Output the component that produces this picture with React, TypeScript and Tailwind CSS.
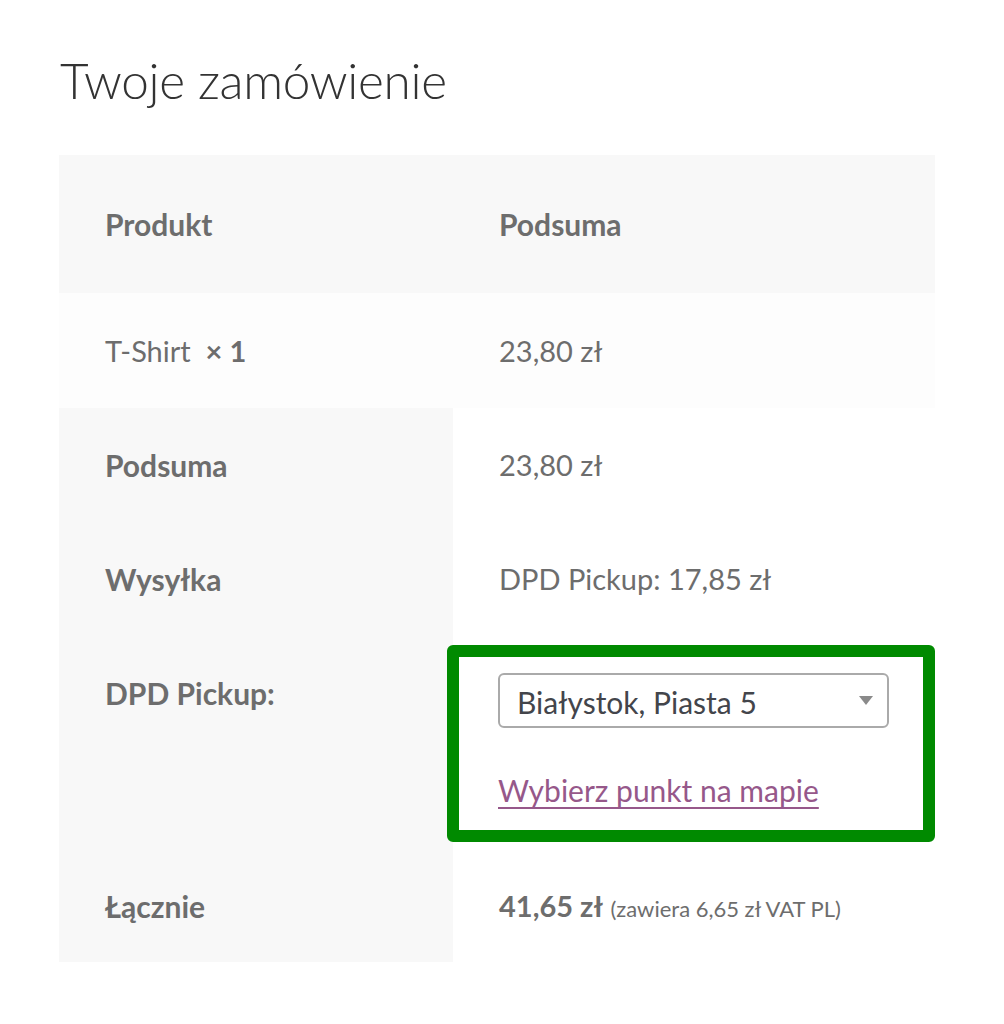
import React from 'react';

const labelCls = 'text-[30px] font-bold text-[#6d6d6d]';
const valueCls = 'text-[#6d6d6d]';

const App = () => {
  return (
    <div className="min-h-screen bg-white font-['Lato',sans-serif] pt-[50px] pl-[59px]">
      {/* Heading */}
      <h1 className="ml-[1px] text-[49.5px] font-light leading-[60px] text-[#333333] tracking-[-0.3px]">
        Twoje zamówienie
      </h1>

      {/* Order table */}
      <div className="mt-[45px] w-[876px] text-[29px]">
        <div className="flex h-[138px] items-center bg-[#f8f8f8]">
          <div className={`w-[394px] pl-[46px] ${labelCls}`}>Produkt</div>
          <div className={`pl-[46px] ${labelCls}`}>Podsuma</div>
        </div>

        <div className="flex h-[115px] items-center bg-[#fdfdfd]">
          <div className={`w-[394px] pl-[46px] ${valueCls}`}>
            T-Shirt&nbsp; <span className="font-bold">× 1</span>
          </div>
          <div className={`pl-[46px] ${valueCls}`}>23,80 zł</div>
        </div>

        <div className="flex h-[114px]">
          <div className={`flex w-[394px] items-center bg-[#f8f8f8] pl-[46px] ${labelCls}`}>Podsuma</div>
          <div className={`flex items-center pl-[46px] ${valueCls}`}>23,80 zł</div>
        </div>

        <div className="flex h-[114px]">
          <div className={`flex w-[394px] items-center bg-[#f8f8f8] pl-[46px] ${labelCls}`}>Wysyłka</div>
          <div className={`flex items-center pl-[46px] ${valueCls}`}>DPD Pickup: 17,85 zł</div>
        </div>

        <div className="flex h-[214px]">
          <div className={`w-[394px] bg-[#f8f8f8] pl-[46px] pt-[37px] leading-[40px] ${labelCls}`}>DPD Pickup:</div>
          <div className="flex-1">
            <div className="-ml-[6px] mt-[9px] h-[197px] rounded-[6px] border-[12px] border-[#008a00] pl-[39px] pr-[34px] pt-[16px]">
              <div className="flex h-[55px] items-center justify-between rounded-[6px] border-2 border-[#aaaaaa] bg-white pl-[17px] pr-[14px]">
                <span className="pt-[4px] text-[30px] text-[#43454b]">Białystok, Piasta 5</span>
                <svg width="14" height="9" viewBox="0 0 14 9">
                  <path d="M0 0 L14 0 L7 9 Z" fill="#8a8a8a" />
                </svg>
              </div>
              <a href="#" className="mt-[42px] block w-fit text-[30px] leading-[40px] text-[#96588a] underline decoration-[2px] underline-offset-[5px]">
                Wybierz punkt na mapie
              </a>
            </div>
          </div>
        </div>

        <div className="flex h-[112px]">
          <div className={`flex w-[394px] items-center bg-[#f8f8f8] pl-[46px] ${labelCls}`}>Łącznie</div>
          <div className={`flex items-center pl-[46px] ${valueCls}`}>
            <span>
              <span className="font-bold">41,65 zł</span>{' '}
              <span className="text-[22px]">(zawiera 6,65 zł VAT PL)</span>
            </span>
          </div>
        </div>
      </div>
    </div>
  );
};

export default App;
